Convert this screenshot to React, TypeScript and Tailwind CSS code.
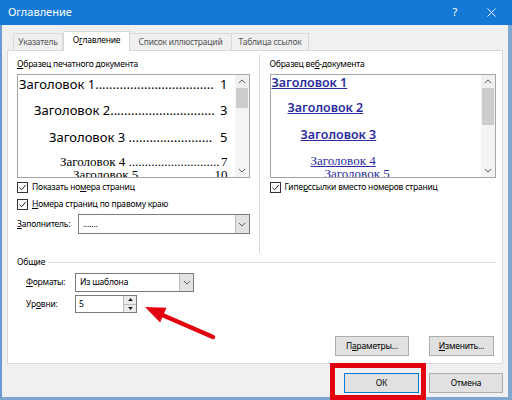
import React from 'react';

function Check({ label }: { label: React.ReactNode }) {
  return (
    <div className="flex h-[12px] items-center gap-[4px] leading-[12px]">
      <div className="flex h-[11px] w-[11px] shrink-0 items-center justify-center border border-[#333] bg-white">
        <svg viewBox="0 0 10 10" className="h-[9px] w-[9px]">
          <path d="M1.5 5.2 L4 7.6 L8.6 2.2" fill="none" stroke="#222" strokeWidth="1.1" />
        </svg>
      </div>
      <span>{label}</span>
    </div>
  );
}

function Chevron({ up = false }: { up?: boolean }) {
  return (
    <svg viewBox="0 0 10 6" className="h-[5px] w-[8px]">
      <path d={up ? 'M1 5 L5 1 L9 5' : 'M1 1 L5 5 L9 1'} fill="none" stroke="#555" strokeWidth="1.2" />
    </svg>
  );
}

function Scrollbar({ thumb }: { thumb: string }) {
  return (
    <div className="flex w-[14px] shrink-0 flex-col bg-[#f4f4f4]">
      <div className="flex h-[13px] items-center justify-center bg-[#f0f0f0]">
        <Chevron up />
      </div>
      <div className={`${thumb} mx-px bg-[#cdcdcd]`} />
      <div className="flex-1" />
      <div className="flex h-[14px] items-center justify-center">
        <Chevron />
      </div>
    </div>
  );
}

function TocLine({ title, dots, page, className }: { title: string; dots: number; page: string; className: string }) {
  return (
    <div className={`flex justify-between whitespace-pre pr-[7px] ${className}`}>
      <span>
        {title}
        {'.'.repeat(dots)}
      </span>
      <span>{page}</span>
    </div>
  );
}

function Select({ value, className }: { value: string; className: string }) {
  return (
    <div className={`flex border border-[#7a7a7a] bg-white ${className}`}>
      <div className="flex flex-1 items-center pl-[4px]">{value}</div>
      <div className="flex w-[14px] items-center justify-center border-l border-[#b9b9b9] bg-[#e3e3e3]">
        <Chevron />
      </div>
    </div>
  );
}

function Button({ children, className }: { children: React.ReactNode; className: string }) {
  return (
    <div className={`flex items-center justify-center border bg-[#e1e1e1] ${className}`}>{children}</div>
  );
}

export default function App() {
  const tabs = ['Указатель', 'Оглавление', 'Список иллюстраций', 'Таблица ссылок'];
  const tabW = ['w-[50px]', 'w-[67px]', 'w-[103px]', 'w-[78px]'];

  return (
    <div className="relative flex h-[400px] w-[512px] flex-col overflow-hidden bg-[#f0f0f0] font-['Noto_Sans',sans-serif] text-[8.5px] tracking-[-0.2px] text-black">
      {/* title bar */}
      <div className="flex h-[25px] shrink-0 items-center bg-[#1479d4] pl-[8px] text-white">
        <span className="text-[11px] tracking-normal">Оглавление</span>
        <span className="ml-auto text-[11px]">?</span>
        <svg viewBox="0 0 10 10" className="ml-[30px] mr-[16px] h-[9px] w-[9px]">
          <path d="M0.5 0.5 L9.5 9.5 M9.5 0.5 L0.5 9.5" stroke="white" strokeWidth="1" />
        </svg>
      </div>

      <div className="flex flex-1 flex-col border-b-[3px] border-l-2 border-r-[4px] border-b-[#7ea6cf] border-l-[#6a9bd0] border-r-[#7ea6cf] pl-[5px] pr-[5px]">
        {/* tabs */}
        <div className="flex h-[25px] items-end pl-[6px]">
          {tabs.map((t, i) =>
            i === 1 ? (
              <div
                key={t}
                className={`${tabW[i]} relative z-10 -mb-px flex h-[20px] items-center justify-center border border-b-0 border-[#d9d9d9] bg-white pb-[2px]`}
              >
                О<u>г</u>лавление
              </div>
            ) : (
              <div
                key={t}
                className={`${tabW[i]} -ml-px flex h-[17px] items-center justify-center border border-b-0 border-[#d9d9d9] bg-[#f0f0f0] text-[#555] first:ml-0`}
              >
                {t}
              </div>
            ),
          )}
        </div>

        {/* panel */}
        <div className="flex h-[314px] flex-col border border-[#d9d9d9] bg-white pl-[9px] pr-[6px] pt-[7px]">
          <div className="flex">
            {/* left column */}
            <div className="flex w-[233px] flex-col">
              <div className="leading-[12px]">
                <u>О</u>бразец печатного документа
              </div>
              <div className="mt-[4px] flex h-[104px] overflow-hidden border border-[#a5a5a5] bg-white tracking-normal">
                <div className="flex min-w-0 flex-1 flex-col">
                  <TocLine title="Заголовок 1" dots={34} page=" 1" className="mt-px pl-px font-['Noto_Sans'] text-[13px] leading-[16px]" />
                  <TocLine title="Заголовок 2" dots={30} page=" 3" className="mt-[10px] pl-[16px] font-['Noto_Sans'] text-[13px] leading-[16px]" />
                  <TocLine title="Заголовок 3 " dots={24} page=" 5" className="mt-[11px] pl-[31px] font-['Noto_Sans'] text-[13px] leading-[16px]" />
                  <TocLine title="Заголовок 4 " dots={28} page="7" className="mt-[10px] pl-[42px] font-['Liberation_Serif',serif] text-[13px] leading-[13px]" />
                  <TocLine title="Заголовок 5 " dots={20} page="10" className="pl-[55px] font-['Liberation_Serif',serif] text-[13px] leading-[13px]" />
                </div>
                <Scrollbar thumb="h-[20px]" />
              </div>
              <div className="mt-[3px]">
                <Check label={<>Показать но<u>м</u>ера страниц</>} />
              </div>
              <div className="mt-[5px]">
                <Check label={<><u>Н</u>омера страниц по правому краю</>} />
              </div>
              <div className="mt-[4px] flex h-[20px] items-center">
                <span className="w-[61px]">
                  <u>З</u>аполнитель:
                </span>
                <Select value="......." className="h-[20px] flex-1" />
              </div>
            </div>

            {/* divider */}
            <div className="ml-[9px] mr-[10px] mt-[-3px] h-[198px] w-px bg-[#d5d5d5]" />

            {/* right column */}
            <div className="flex w-[227px] flex-col">
              <div className="leading-[12px]">
                Образец ве<u>б</u>-документа
              </div>
              <div className="mt-[4px] flex h-[104px] overflow-hidden border border-[#a5a5a5] bg-white tracking-normal">
                <div className="flex min-w-0 flex-1 flex-col whitespace-nowrap text-[#2b2b9e] underline">
                  <div className="pl-px font-['Noto_Sans'] text-[12.5px] font-semibold leading-[16px]">Заголовок 1</div>
                  <div className="mt-[9px] pl-[17px] font-['Noto_Sans'] text-[12.5px] font-semibold leading-[16px]">Заголовок 2</div>
                  <div className="mt-[11px] pl-[30px] font-['Noto_Sans'] text-[12.5px] font-semibold leading-[16px]">Заголовок 3</div>
                  <div className="mt-[11px] pl-[40px] font-['Liberation_Serif',serif] text-[13px] leading-[13px]">Заголовок 4</div>
                  <div className="pl-[54px] font-['Liberation_Serif',serif] text-[13px] leading-[13px]">Заголовок 5</div>
                </div>
                <Scrollbar thumb="h-[37px]" />
              </div>
              <div className="mt-[3px]">
                <Check label={<>Гипе<u>р</u>ссылки вместо номеров страниц</>} />
              </div>
            </div>
          </div>

          {/* general group */}
          <div className="mt-[3px] flex h-[12px] items-center leading-[12px]">
            <span>Общие</span>
            <div className="ml-[3px] h-px flex-1 bg-[#dcdcdc]" />
          </div>
          <div className="mt-[5px] flex h-[19px] items-center pl-[9px]">
            <span className="w-[49px]">
              <u>Ф</u>орматы:
            </span>
            <Select value="Из шаблона" className="h-[19px] w-[119px]" />
          </div>
          <div className="mt-[3px] flex h-[18px] items-center pl-[9px]">
            <span className="w-[49px]">
              Ур<u>о</u>вни:
            </span>
            <div className="flex h-[18px] w-[62px] border border-[#7a7a7a] bg-white">
              <div className="flex flex-1 items-center pl-[3px]">5</div>
              <div className="flex w-[13px] flex-col border-l border-[#b9b9b9]">
                <div className="flex flex-1 items-center justify-center border-b border-[#b9b9b9] bg-[#ececec]">
                  <svg viewBox="0 0 6 4" className="h-[3px] w-[5px]">
                    <path d="M0 4 L3 0 L6 4 Z" fill="#111" />
                  </svg>
                </div>
                <div className="flex flex-1 items-center justify-center bg-[#ececec]">
                  <svg viewBox="0 0 6 4" className="h-[3px] w-[5px]">
                    <path d="M0 0 L3 4 L6 0 Z" fill="#111" />
                  </svg>
                </div>
              </div>
            </div>
          </div>

          <div className="mr-[2px] mt-[23px] flex justify-end gap-[20px]">
            <Button className="h-[20px] w-[74px] border-[#adadad]">
              П<u>а</u>раметры...
            </Button>
            <Button className="h-[20px] w-[65px] border-[#adadad]">
              <u>И</u>зменить...
            </Button>
          </div>
        </div>

        {/* footer */}
        <div className="mt-[9px] flex justify-end gap-[10px]">
          <Button className="h-[20px] w-[75px] border-[#0078d7]">ОК</Button>
          <Button className="h-[20px] w-[74px] border-[#adadad]">Отмена</Button>
        </div>
      </div>

      {/* annotations */}
      <div className="pointer-events-none absolute left-[330px] top-[363px] h-[37px] w-[96px] border-[5px] border-[#e3000f]" />
      <svg className="pointer-events-none absolute left-0 top-0 h-[400px] w-[512px]" viewBox="0 0 512 400">
        <line x1="213" y1="337" x2="160" y2="314" stroke="#e3000f" strokeWidth="4.5" strokeLinecap="round" />
        <polygon points="145,307 166.5,307.8 160.1,322.4" fill="#e3000f" />
      </svg>
    </div>
  );
}
